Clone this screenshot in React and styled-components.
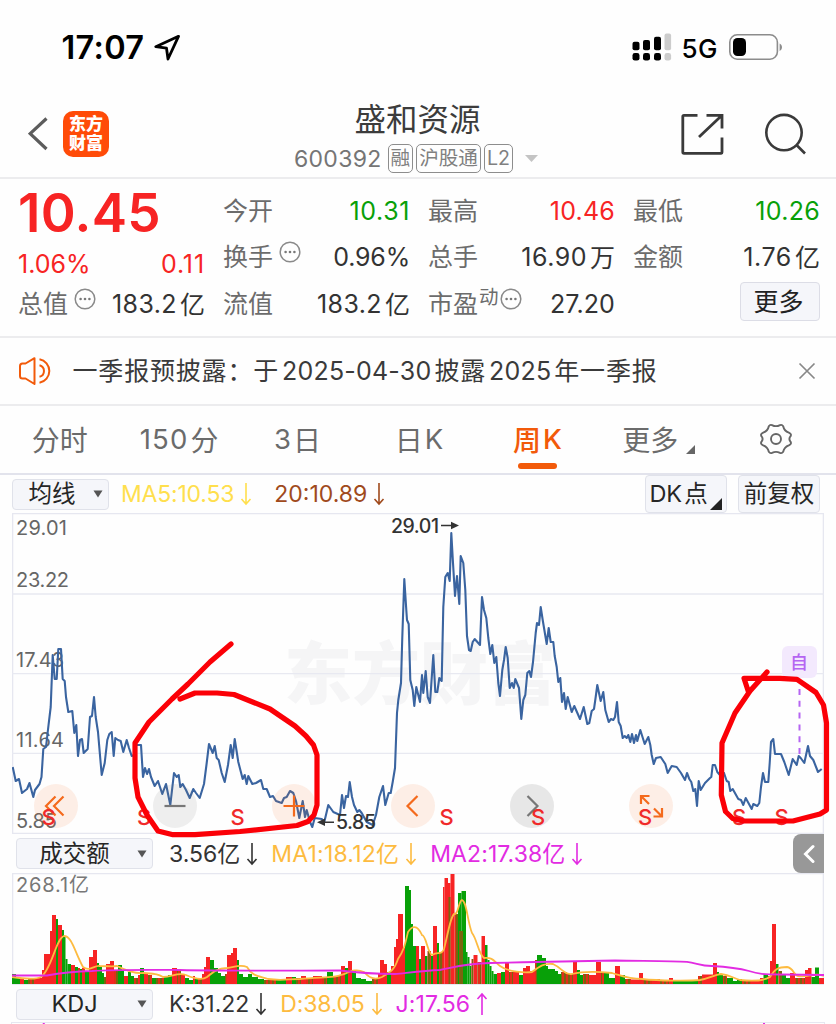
import React from 'react';
import styled, { createGlobalStyle, css } from 'styled-components';

const GlobalStyle = createGlobalStyle`
	* {
		box-sizing: border-box;
	}
	body {
		margin: 0;
		background: #fefefe;
		font-family: Inter, 'Noto Sans CJK SC', sans-serif;
		font-weight: 400;
		color: #333;
		-webkit-font-smoothing: antialiased;
	}
`;

const RED = '#f72424';
const GREEN = '#08a008';
const ORANGE = '#f25a0a';
const GOLD = '#fdbb40';
const PINK = '#e22be2';

const PRICE = [
	'12.7,767 15.7,781 19,779 22,793 27,789 29.5,783 33.3,797 35,790 39.5,784 41.5,777 43.3,749 46,747 48.3,727 50.7,707',
	'52.7,655 54.7,679 56.7,679 58.3,649 61,649 62.7,679 64.7,681 66,697 68.3,712 72.3,711 74.3,733 76.3,725 78,756 80,740 82,739',
	'83.7,753 87.7,749 90,717 92,716 94,697 95.7,717 98,732 101.7,775 104.7,763 107.3,740 109.3,734 111.7,732 113.7,756',
	'115.3,738 118,740 120.7,741 123.3,752 126.7,740 129,748 131.7,756 134.3,755 136,745 141,745 143,777 145,768 147,774 149,769',
	'151,777 154.7,786 158,781 162.3,794 166,784 170.3,805 174,773 176.7,777 178.7,775 180.3,787 182.7,784 186,790 189.7,798',
	'193.3,789 196,793 199.7,798 204,784 206.7,763 209,744 212.7,753 214.7,746 216.7,758 218.7,760 221.7,773 224.7,782 228,765',
	'230.7,745 232.7,758 234.7,739 238.3,762 242.7,779 244.7,775 246.7,784 248.3,776 252.3,784 256,783 261,780 263.3,789 266.7,789',
	'270,797 273,796 276,801 281.7,803 284,798 286.7,797 290,791 293.3,793 296,801 299.3,818 302.7,801 305,817 306.7,810 310,822',
	'312.3,827 314.7,818 321.7,819 324.3,822 328.3,805 333.3,812 340,815 342,795 344,808 346,796 348,797 349.7,782 352,797',
	'354,805 357.3,812 359.3,810 361.7,813 366.7,822 372.7,825 376,815 379.3,797 383,786 385.3,805 388.7,793 390.7,793',
	'392.7,782 395,768 397,713 398.3,700 401,683 402.3,637 404.3,579 406.3,610 407,620 408.7,624 410.3,680 412.7,690 414.3,706',
	'416.3,687 420,702 422,675 423.3,693 425.7,671 427.7,697 430,703 433.3,655 435.3,692 437.3,692 439.3,678 441.7,681',
	'443.3,607 445.3,577 447.7,573 449.7,581 451.3,533 453,563 455,596 457,576 459.3,604 460.7,556 463.3,563 465.3,590 467,636',
	'469,650 470.7,651 472.7,642 474.7,639 480,645 481,620 482,597 484,610 486.3,618 488.3,638 490.3,654 492.3,645 494.3,663',
	'496.3,657 498.3,683 500,696 502.3,670 504,660 505.7,647 507.7,658 509.7,688 512,683 513.7,688 515.3,679 519,688 521.3,719',
	'523.3,700 525.3,695 527.3,673 529.3,671 531,677 533,662 535.7,633 537,623 539,625 540.7,607 542.7,620 546.7,644 548.7,628',
	'550.7,642 553.3,642 554.7,656 556.7,667 558.3,682 560.3,678 562,702 564,693 565.7,709 567.7,697 571.7,712 574.3,706 580,719',
	'583.7,707 587.3,724 589.3,723 591.7,711 594,709 595.7,697 597.3,685 600.7,701 603.3,692 605.3,710 608.7,722 611,719 613.3,720',
	'615,717 617,702 618.7,722 620.7,726 622.7,738 624.7,736 626.7,738 628.3,735 630.3,742 632,734 634,743 636,735 637.3,741 640.3,730',
	'644.7,744 648.3,737 650.3,745 651.7,755 653.7,764 656,758 660.7,757 665.3,764 667.7,773 671.7,766 676.7,767 681,773 685,780',
	'687,773 689.3,779 691.3,782 693.3,791 695.3,789 697,806 698.7,781 700.7,790 705,783 710,778 711.3,777 712.7,765 715,765',
	'717.3,772 721.7,777 724,773 726.7,781 728.7,782 730.3,791 732.7,789 738.3,799 741,800 743.3,805 745.7,798 751.7,809',
	'753.3,804 757.3,806 759.3,803 761,787 763,773 765,782 768.3,782 769.7,763 771,742 773.3,739 775,754 781,754 784.3,762',
	'788.7,775 792.7,759 796.7,765 798.7,756 800.7,758 804.3,763 808,746 810,756 813.3,760 818,772 821.7,769',
].join(' ');

// [end x, height, colour]: every bar starts where the one before it ends
const BARS = [
	[16, 10, 'g'], [20, 6, 'g'], [24, 5, 'r'], [28, 4, 'g'], [34, 5, 'm'], [42, 6, 'r'], [44, 14, 'r'], [50, 30, 'r'], [52, 53, 'r'],
	[56, 69, 'r'], [58, 65, 'g'], [62, 59, 'r'], [64, 54, 'g'], [65.5, 48, 'g'], [67.5, 25, 'g'], [71, 20, 'g'], [75, 19, 'r'],
	[78, 17, 'g'], [80, 16, 'm'], [82, 15, 'g'], [85, 16, 'r'], [89, 12, 'g'], [93, 27, 'r'], [97, 34, 'r'], [99, 21, 'g'],
	[102, 17, 'g'], [104, 11, 'g'], [106, 7, 'm'], [110, 20, 'r'], [114, 23, 'r'], [118, 14, 'm'], [122, 19, 'g'], [124, 14, 'g'],
	[128, 8, 'r'], [131, 12, 'g'], [134, 8, 'g'], [138, 6, 'm'], [140, 9, 'r'], [144, 16, 'g'], [148, 10, 'r'], [152, 9, 'm'],
	[156, 6, 'g'], [164, 6, 'm'], [168, 8, 'g'], [172, 9, 'g'], [177, 16, 'r'], [181, 14, 'm'], [185, 10, 'r'], [189, 6, 'g'],
	[193, 4, 'g'], [195, 8, 'r'], [198, 6, 'g'], [202, 5, 'm'], [204, 10, 'r'], [206, 17, 'r'], [210, 27, 'r'], [214, 24, 'g'],
	[218, 16, 'g'], [221, 11, 'g'], [225, 8, 'g'], [227, 10, 'm'], [231, 29, 'r'], [233, 31, 'r'], [237, 36, 'r'], [239, 24, 'g'],
	[243, 10, 'g'], [248, 7, 'g'], [252, 10, 'g'], [258, 7, 'g'], [264, 5, 'g'], [276, 4, 'm'], [286, 4, 'g'], [292, 7, 'r'],
	[296, 7, 'g'], [301, 6, 'm'], [306, 8, 'r'], [313, 6, 'm'], [322, 8, 'r'], [327, 6, 'm'], [333, 12, 'g'], [341, 8, 'm'],
	[345, 18, 'r'], [348, 16, 'g'], [352, 23, 'r'], [356, 14, 'g'], [361, 6, 'g'], [366, 5, 'g'], [372, 3, 'g'], [378, 5, 'm'],
	[380, 10, 'r'], [384, 24, 'r'], [387, 20, 'r'], [391, 12, 'g'], [394, 18, 'r'], [396, 37, 'r'], [398, 45, 'r'], [403, 70, 'r'],
	[405, 36, 'r'], [409, 98, 'g'], [411, 94, 'g'], [413, 60, 'g'], [416, 38, 'g'], [419, 38, 'r'], [421, 25, 'g'], [425, 38, 'r'],
	[427.5, 28, 'g'], [431, 33, 'm'], [433, 28, 'g'], [437, 58, 'r'], [439, 41, 'g'], [443, 32, 'm'], [444.5, 97, 'r'],
	[448, 106, 'r'], [450.5, 101, 'r'], [454.5, 110, 'r'], [458, 70, 'm'], [461.5, 91, 'g'], [466, 93, 'g'], [467.5, 32, 'g'],
	[469.5, 27, 'g'], [471.5, 18, 'g'], [473.5, 25, 'm'], [477.5, 29, 'r'], [481.5, 22, 'm'], [485, 48, 'r'], [487.5, 39, 'g'],
	[489.5, 24, 'g'], [491.5, 18, 'g'], [493.5, 13, 'g'], [497, 10, 'g'], [501, 11, 'r'], [505, 12, 'g'], [509, 22, 'r'],
	[513, 12, 'm'], [519, 12, 'r'], [523, 9, 'g'], [526, 16, 'r'], [530, 18, 'r'], [535, 13, 'r'], [537, 24, 'm'], [542, 29, 'g'],
	[546, 26, 'g'], [548, 18, 'g'], [555, 15, 'g'], [558, 13, 'g'], [561, 10, 'g'], [567, 12, 'm'], [573, 10, 'm'], [577, 22, 'r'],
	[580, 14, 'g'], [583, 9, 'g'], [589, 10, 'm'], [596, 9, 'r'], [601, 22, 'r'], [604, 11, 'm'], [609, 12, 'g'], [615, 6, 'g'],
	[620, 18, 'r'], [625, 9, 'g'], [631, 5, 'm'], [639, 4.5, 'r'], [643, 11, 'r'], [652, 4.5, 'm'], [660, 5, 'r'], [669, 4, 'm'],
	[673, 6, 'r'], [698, 3.5, 'g'], [702, 8, 'm'], [713, 9.5, 'r'], [717, 21, 'r'], [719, 12, 'g'], [723, 9, 'g'], [727, 8, 'm'],
	[733, 6, 'g'], [737, 3, 'g'], [742, 5, 'g'], [751, 4, 'm'], [760, 3.5, 'r'], [763.5, 6, 'r'], [768, 10, 'g'], [770, 8, 'r'],
	[772, 23, 'r'], [776, 60, 'r'], [778.5, 20, 'g'], [782, 13, 'm'], [786, 9, 'g'], [790, 6, 'g'], [795, 11, 'r'], [805, 6, 'm'],
	[808, 14, 'r'], [811.5, 16, 'r'], [815, 7, 'g'], [819, 16.5, 'g'], [824, 6, 'r'],
];

const BAR_FILL = { r: '#f72424', g: '#08a008', m: 'url(#mixed)' };

const QUOTES = [
	{ label: '今开', value: '10.31', color: GREEN, spacing: 0.6 },
	{ label: '最高', value: '10.46', color: RED, spacing: 0.2 },
	{ label: '最低', value: '10.26', color: GREEN, spacing: 0.3 },
	{ label: '换手', value: '0.96%', spacing: -0.2, info: true },
	{ label: '总手', value: '16.90', unit: '万', spacing: 0.5 },
	{ label: '金额', value: '1.76', unit: '亿', spacing: 0.6 },
	{ label: '流值', value: '183.2', unit: '亿', spacing: 0.4 },
	{ label: '市盈', value: '27.20', sup: '动', spacing: 0.1, info: true },
];

const MoreDots = () => (
	<Info width="22" height="22" viewBox="0 0 22 22" fill="none">
		<circle cx="11" cy="11" r="9.8" stroke="#8a8a8a" strokeWidth="1.5" />
		<g fill="#777">
			<circle cx="6.6" cy="11" r="1.3" />
			<circle cx="11" cy="11" r="1.3" />
			<circle cx="15.4" cy="11" r="1.3" />
		</g>
	</Info>
);

const Arrow = ({ up }) => (
	<ArrowSvg $up={up} width="12" height="24" viewBox="0 0 12 24" fill="none" stroke="currentColor" strokeWidth="1.6">
		<path d="M6 1V21.5M1.5 17L6 22L10.5 17" />
	</ArrowSvg>
);

const Caret = () => (
	<svg width="10" height="8" viewBox="0 0 10 8">
		<path d="M0.5 0.5H9.5L5 7.5Z" fill="#555" />
	</svg>
);

const StatusIcons = () => (
	<svg width="152" height="32" viewBox="632 32 152 32" fill="none">
		<g>
			<rect x="632.5" y="41.8" width="7" height="8.4" rx="2" fill="#000" />
			<rect x="643" y="40" width="7" height="10.2" rx="2" fill="#000" />
			<rect x="654" y="36.8" width="7" height="13.4" rx="2" fill="#000" />
			<rect x="664.5" y="33.4" width="6.6" height="16.8" rx="2" fill="#ccc" />
			<rect x="632.5" y="53" width="7" height="7.6" rx="2.4" fill="#000" />
			<rect x="643" y="53" width="7" height="7.6" rx="2.4" fill="#000" />
			<rect x="654" y="53" width="7" height="7.6" rx="2.4" fill="#000" />
			<rect x="664.5" y="53" width="6.6" height="7.6" rx="2.4" fill="#ccc" />
		</g>
		<text x="681.5" y="57.8" fontSize="26" fontWeight="500" fill="#000" textLength="36">5G</text>
		<rect x="729.8" y="34.8" width="47.6" height="24.4" rx="7.5" stroke="#8c8c8c" strokeWidth="1.6" />
		<rect x="733" y="38" width="13" height="18" rx="4.5" fill="#000" />
		<path d="M779.6 43.5C782.8 45 782.8 49.5 779.6 51Z" fill="#8c8c8c" />
	</svg>
);

const PriceChart = () => (
	<svg width="812" height="321" viewBox="12 513 812 321" fill="none">
		<text x="284" y="699" fontSize="68" fontWeight="900" fill="#f5f5f6" textLength="272">东方财富</text>
		<path d="M12 594H824M12 673.7H824M12 753.3H824" stroke="#e8e9f1" strokeWidth="1.3" />
		<g fontSize="20" fill="#666">
			<text x="16" y="534.5" textLength="51">29.01</text>
			<text x="16" y="587.3" textLength="53">23.22</text>
			<text x="16" y="667.3" textLength="48">17.43</text>
			<text x="16" y="747.3" textLength="48">11.64</text>
			<text x="16" y="827.5" textLength="41">5.85</text>
		</g>
		<polyline points={PRICE} stroke="#3a64a0" strokeWidth="2.1" strokeLinejoin="round" />
		<path d="M799.5 689V754" stroke="#b565f2" strokeWidth="2" strokeDasharray="6 5.8" />
		<rect x="782" y="646" width="35" height="32" rx="6" fill="#f3e9fd" />
		<text x="790" y="669" fontSize="18" fontWeight="500" fill="#b565f2">自</text>
		<g fontSize="19.5" fontWeight="500" fill="#333">
			<text x="391" y="532.5" textLength="48">29.01</text>
			<text x="336" y="829.3" textLength="40">5.85</text>
		</g>
		<path d="M441 525.5H453M334 822.3H322" stroke="#333" strokeWidth="1.6" />
		<path d="M451 521.7L459 525.5L451 529.3ZM325 818.5L317 822.3L325 826.1Z" fill="#333" />
	</svg>
);

const Marks = () => (
	<MarksSvg width="812" height="321" viewBox="12 513 812 321" fill="none">
		<g fontSize="22" fontWeight="500" fill="#f02a2a" textAnchor="middle">
			{[48.5, 144, 237.5, 446.5, 538, 645, 739, 781.5].map(x => (
				<text key={x} x={x} y="825">S</text>
			))}
		</g>
		<g stroke="#fb0007" strokeWidth="5.2" strokeLinecap="round" strokeLinejoin="round">
			<path d="M231 644L210 662L188 684L172 699L149 722L135 743V778L138 797L147 815L158 831L173 834.7H195L240 831.5L297 825.5L308 821.5L314 815L317 805V755L313.5 745L306 736L295 726L270 709L234 694.5L217 693H195L180 699" />
			<path d="M767 672L750 691L735 713L722 743L721.3 795L725.5 811.5L732.7 818.5L743 821H793L820 814L826.5 810V723L823.5 705L816 692.5L797 679.3L780 678.3H744L748.5 692" />
		</g>
	</MarksSvg>
);

const VolumeChart = () => (
	<svg width="812" height="112" viewBox="12 873 812 112" fill="none">
		<defs>
			<pattern id="mixed" width="4" height="4" patternUnits="userSpaceOnUse">
				<rect width="4" height="4" fill="#e03018" />
				<rect width="2" height="4" fill="#7a6410" />
			</pattern>
		</defs>
		<text x="16" y="892" fontSize="20" fill="#777" textLength="73">268.1亿</text>
		{BARS.map(([end, height, kind], i) => {
			const start = i ? BARS[i - 1][0] : 12;
			return <rect key={end} x={start} y={984 - height} width={end - start} height={height} fill={BAR_FILL[kind]} />;
		})}
		<path d="M448.5 984V897H450.5V984ZM459 984V931H463V984Z" fill="#7a6410" />
		<path
			d="M12 977C25 979 35 980 41 977C52 969 56 938 64 936C72 936 75 953 83 967C90 972 94 965 100 966C108 966 112 967 117 966C126 970 134 974 144 973C155 974 158 974 163 977C172 977 178 972 186 975C195 979 203 980 207 977C213 972 218 968 227 968C235 967 240 964 247 967C252 976 258 976 268 979C282 981 288 979 300 979C320 977 335 978 341 975C350 972 355 968 364 972C370 979 376 980 382 977C390 972 394 971 398 959C404 950 405 945 408 932C412 926 417 924 422 935C426 935 428 954 432 955C438 951 441 956 444 949C448 934 450 918 454 914C458 916 459 900 462 900C467 902 467 920 472 933C477 939 478 953 484 958C494 957 494 962 500 966C508 972 525 973 532 972C540 966 544 963 553 964C562 968 564 975 572 974C584 971 602 972 612 973C622 976 628 979 642 979C660 981 690 981 700 980C710 978 714 975 721 974C730 975 733 978 740 980C750 981 764 981 770 977C775 969 778 967 787 967C794 968 793 975 798 976C808 978 815 972 824 976"
			stroke={GOLD}
			strokeWidth="1.8"
		/>
		<path
			d="M12 975.5H47C60 973 75 971.5 92 971C115 969.5 140 969.8 180 970C230 971 290 970.5 340 970.5C360 973 375 974 395 974C410 972.5 425 970.5 440 970C455 967 465 963.5 490 963C530 962 560 961.5 615 960.5C640 961 670 961 687 961.8C697 963 700 966 712 966C730 967 738 968 749 971C758 974 764 974.5 780 974.5L824 975"
			stroke={PINK}
			strokeWidth="1.8"
		/>
	</svg>
);

const App = () => (
	<Screen>
		<GlobalStyle />
		<StatusBar>
			<Clock>17:07</Clock>
			<svg width="27" height="27" viewBox="154 34 27 27" fill="none">
				<path d="M178.5 36.3L155.8 46.7L166.5 48.2L168 59L178.5 36.3Z" stroke="#000" strokeWidth="2.8" strokeLinejoin="round" />
			</svg>
			<Spacer />
			<StatusIcons />
		</StatusBar>

		<Header>
			<svg width="20" height="34" viewBox="28 118 20 34" fill="none">
				<path d="M46.5 119.5L30.2 134.7L46.5 150" stroke="#5c5c5c" strokeWidth="3.2" />
			</svg>
			<Logo>东方<br />财富</Logo>
			<Title>
				<h1>盛和资源</h1>
				<Codes>
					<Code>600392</Code>
					<Badge>融</Badge>
					<Badge>沪股通</Badge>
					<Badge>L2</Badge>
					<svg width="13" height="7" viewBox="0 0 13 7"><path d="M0 0H13L6.5 7Z" fill="#c4c4c4" /></svg>
				</Codes>
			</Title>
			<HeaderActions>
				<svg width="44" height="44" viewBox="681 112 44 44" fill="none" stroke="#3a3a3a" strokeWidth="2.8">
					<path d="M697.5 115.3H684Q682.8 115.3 682.8 116.5V152Q682.8 153.3 684 153.3H721.3Q722 153.3 722 152.3V137.5M706.5 115.3H722V128.5M722 115.3L699 137" />
				</svg>
				<svg width="44" height="44" viewBox="763 112 44 44" fill="none" stroke="#3a3a3a" strokeWidth="2.6">
					<circle cx="784" cy="132.6" r="17.7" />
					<path d="M796.5 145L805 153.5" />
				</svg>
			</HeaderActions>
		</Header>

		<Quote>
			<PriceBlock>
				<Price>10.45</Price>
				<Change>
					<Delta>1.06%</Delta>
					<Delta $spacing={0.9}>0.11</Delta>
				</Change>
				<Cell>
					<Label>总值</Label>
					<MoreDots />
					<Value $spacing={0.4}>183.2<Unit>亿</Unit></Value>
				</Cell>
			</PriceBlock>
			<Stats>
				{QUOTES.map(({ label, value, unit, color, info, sup, spacing }) => (
					<Cell key={label}>
						<Label>{label}</Label>
						{sup && <Sup>{sup}</Sup>}
						{info && <MoreDots />}
						<Value $color={color} $spacing={spacing}>
							{value}
							{unit && <Unit>{unit}</Unit>}
						</Value>
					</Cell>
				))}
				<Cell>
					<MoreButton>更多</MoreButton>
				</Cell>
			</Stats>
		</Quote>

		<Notice>
			<svg width="36" height="30" viewBox="18 355 36 30" fill="none" stroke={ORANGE} strokeWidth="2" strokeLinejoin="round">
				<path d="M34.5 357.2L25.5 362.5H22.5Q20 362.5 20 365V375Q20 377.5 22.5 377.5H25.5L34.5 383Z" />
				<path d="M39.5 358.2A12 12 0 0 1 39.5 381.8M39.5 364.2A6 6 0 0 1 39.5 375.8" />
			</svg>
			<NoticeText>
				一季报预披露：于<b>2025-04-30</b>披露<b>2025</b>年一季报
			</NoticeText>
			<svg width="18" height="18" viewBox="0 0 18 18" stroke="#888" strokeWidth="1.7"><path d="M1.5 1.5L16.5 16.5M16.5 1.5L1.5 16.5" /></svg>
		</Notice>

		<Tabs>
			<Tab>分时</Tab>
			<Tab $spacing={1.2} $shift={-1}><b>150</b>分</Tab>
			<Tab $shift={-2}><b>3</b>日</Tab>
			<Tab $shift={2}>日<b>K</b></Tab>
			<Tab $active $shift={1}>周<b>K</b></Tab>
			<Tab $shift={-2}>
				更多
				<TabCorner width="9" height="9" viewBox="0 0 9 9"><path d="M9 0V9H0Z" fill="#666" /></TabCorner>
			</Tab>
			<Tab>
				<svg width="34" height="32" viewBox="0 0 34 32" fill="none" stroke="#666" strokeWidth="1.9" strokeLinejoin="round">
					<circle cx="17" cy="16" r="5" />
					<path d="M9.8 3.2Q11 1.3 13 2.1Q17 4.2 21 2.1Q23 1.3 24.2 3.2Q25.2 8 29.8 9.6Q32.8 11 31.6 13.2Q29.2 16 31.6 18.8Q32.8 21 29.8 22.4Q25.2 24 24.2 28.8Q23 30.7 21 29.9Q17 27.8 13 29.9Q11 30.7 9.8 28.8Q8.8 24 4.2 22.4Q1.2 21 2.4 18.8Q4.8 16 2.4 13.2Q1.2 11 4.2 9.6Q8.8 8 9.8 3.2Z" />
				</svg>
			</Tab>
		</Tabs>

		<Legend $main>
			<Select $w={97}><span>均线</span><Caret /></Select>
			<Series $color="#ffdf4d" $left={12} $spacing={-0.2}>MA5:10.53<Arrow /></Series>
			<Series $color="#a04a1c" $left={22}>20:10.89<Arrow /></Series>
			<Spacer />
			<Toggle $w={82}>
				DK<i>点</i>
				<ToggleCorner width="12" height="12" viewBox="0 0 12 12"><path d="M12 0V12H0Z" fill="#222" /></ToggleCorner>
			</Toggle>
			<Toggle $w={82}>前复权</Toggle>
		</Legend>
		<ChartPanel $h={321}>
			<PriceChart />
			<ChartTools>
				<ToolButton>
					<svg width="28" height="28" viewBox="0 0 28 28"><path d="M13.5 4.5L4 14L13.5 23.5M21.5 4.5L12 14L21.5 23.5" /></svg>
				</ToolButton>
				<ToolButton $grey>
					<svg width="28" height="28" viewBox="0 0 28 28"><path d="M3.5 14H24.5" /></svg>
				</ToolButton>
				<ToolButton>
					<svg width="28" height="28" viewBox="0 0 28 28"><path d="M3.5 14H24.5M14 3.5V24.5" /></svg>
				</ToolButton>
				<ToolButton>
					<svg width="28" height="28" viewBox="0 0 28 28"><path d="M18.5 4L8.5 14L18.5 24" /></svg>
				</ToolButton>
				<ToolButton $grey $strong>
					<svg width="28" height="28" viewBox="0 0 28 28"><path d="M9.5 4L19.5 14L9.5 24" /></svg>
				</ToolButton>
				<ToolButton>
					<svg width="28" height="28" viewBox="0 0 28 28"><path d="M4 12V4H12.5M4 4L12 12M16.5 24.5H25V16M25 24.5L17 16.5" /></svg>
				</ToolButton>
			</ChartTools>
			<Marks />
		</ChartPanel>

		<Legend>
			<Select $w={137}><span>成交额</span><Caret /></Select>
			<Series $color="#333" $left={16}>3.56亿<Arrow /></Series>
			<Series $color={GOLD} $left={13} $spacing={0.2}>MA1:18.12亿<Arrow /></Series>
			<Series $color={PINK} $left={13} $spacing={0.1}>MA2:17.38亿<Arrow /></Series>
			<Spacer />
			<Collapse>
				<svg width="12" height="20" viewBox="0 0 12 20" fill="none" stroke="#fff" strokeWidth="3" strokeLinecap="round"><path d="M10 2.5L2.5 10L10 17.5" /></svg>
			</Collapse>
		</Legend>
		<ChartPanel $h={112}>
			<VolumeChart />
		</ChartPanel>

		<Legend $short>
			<Select $w={137}><span>KDJ</span><Caret /></Select>
			<Series $color="#333" $left={16}>K:31.22<Arrow /></Series>
			<Series $color={GOLD} $left={13} $spacing={-0.2}>D:38.05<Arrow /></Series>
			<Series $color={PINK} $left={13} $spacing={0.1}>J:17.56<Arrow up /></Series>
		</Legend>
		<KdjPeek>
			<svg width="812" height="2" viewBox="12 0 812 2"><path d="M42 2L43 0H44.5L45.5 2ZM763 0H765V2H763Z" fill={PINK} /></svg>
		</KdjPeek>
	</Screen>
);

export default App;

const Screen = styled.main`
	width: 836px;
	height: 1024px;
	overflow: hidden;
	display: flex;
	flex-direction: column;
	background: #fefefe;
	svg {
		flex: none;
		display: block;
	}
`;

const Spacer = styled.div`
	flex: 1;
`;

const StatusBar = styled.div`
	height: 95px;
	flex: none;
	display: flex;
	align-items: center;
	padding: 0 52px 0 61.5px;
`;

const Clock = styled.div`
	width: 92.5px;
	font-size: 32.5px;
	font-weight: 600;
	letter-spacing: .3px;
	color: #000;
`;

const Header = styled.header`
	height: 84px;
	flex: none;
	display: grid;
	grid-template-columns: 20px 46px 1fr 126px;
	grid-template-rows: 78px;
	column-gap: 15px;
	align-items: center;
	padding: 0 29px 4px 28px;
	border-bottom: 2px solid #ececee;
`;

const Logo = styled.div`
	width: 46px;
	height: 46px;
	border-radius: 10px;
	background: #ff4b08;
	color: #fff;
	font-size: 17px;
	font-weight: 900;
	line-height: 19px;
	text-align: center;
	padding-top: 4px;
`;

const Title = styled.div`
	display: flex;
	flex-direction: column;
	align-items: center;
	padding: 9px 0 0 45px;
	h1 {
		margin: 0;
		font-size: 31.5px;
		font-weight: 400;
		line-height: 40px;
		color: #3c3c3c;
	}
`;

const Codes = styled.div`
	display: flex;
	align-items: center;
	gap: 3px;
	height: 38px;
	margin-left: -3px;
	svg {
		margin-left: 9px;
	}
`;

const Code = styled.span`
	font-size: 23px;
	letter-spacing: .3px;
	color: #757575;
	margin-right: 3px;
`;

const Badge = styled.span`
	height: 29px;
	padding: 0 2px;
	border: 1.5px solid #8d8d8d;
	border-radius: 5px;
	font-size: 19.6px;
	line-height: 26px;
	color: #808080;
`;

const HeaderActions = styled.div`
	display: flex;
	gap: 38px;
`;

const Quote = styled.section`
	height: 157px;
	flex: none;
	display: grid;
	grid-template-columns: 187px 1fr;
	column-gap: 18px;
	padding: 8px 16px 0 18px;
`;

const PriceBlock = styled.div`
	display: grid;
	grid-template-rows: 54px 39px 46.5px;
`;

const Price = styled.div`
	font-size: 53px;
	font-weight: 600;
	line-height: 53px;
	letter-spacing: .3px;
	color: ${RED};
`;

const Change = styled.div`
	display: flex;
	justify-content: space-between;
	align-items: center;
	font-size: 25px;
	color: ${RED};
	padding-top: 6px;
`;

const Delta = styled.span`
	letter-spacing: ${({ $spacing }) => $spacing || 0}px;
`;

const Stats = styled.div`
	display: grid;
	grid-template-columns: repeat(3, 187px);
	grid-auto-rows: 46.5px;
	column-gap: 18px;
`;

const Cell = styled.div`
	display: flex;
	align-items: center;
	height: 46.5px;
	& > :last-child {
		margin-left: auto;
	}
`;

const Label = styled.span`
	font-size: 25px;
	line-height: 36px;
	margin-top: 1px;
	color: #6c6c6c;
`;

const Info = styled.svg`
	margin: -9px 0 0 6px;
`;

const Sup = styled.span`
	font-size: 19.5px;
	color: #6c6c6c;
	margin: -15px -5px 0 1px;
`;

const Value = styled.span`
	display: flex;
	align-items: center;
	padding-top: 1px;
	font-size: 25px;
	letter-spacing: ${({ $spacing }) => $spacing || 0}px;
	color: ${({ $color }) => $color || '#333'};
	white-space: nowrap;
`;

const Unit = styled.span`
	margin: -2px 0 0 3px;
	letter-spacing: 0;
`;

const MoreButton = styled.button`
	width: 80px;
	height: 39px;
	padding: 0 3px 0 0;
	margin-top: -3px;
	border: 1.5px solid #dcdde6;
	border-radius: 4px;
	background: #f5f6fa;
	font: inherit;
	font-size: 25px;
	line-height: 34px;
	color: #222;
`;

const Notice = styled.div`
	height: 70px;
	flex: none;
	display: flex;
	align-items: center;
	padding: 0 20px 0 18px;
	border-top: 2px solid #ececee;
	border-bottom: 2px solid #ececee;
`;

const NoticeText = styled.div`
	flex: 1;
	padding: 0 0 4px 18.5px;
	font-size: 25px;
	letter-spacing: .82px;
	color: #3a3a3a;
	b {
		font-weight: 400;
		letter-spacing: .2px;
		margin: 0 3px;
	}
`;

const Tabs = styled.nav`
	height: 69px;
	flex: none;
	display: grid;
	grid-template-columns: repeat(7, 1fr);
	border-bottom: 2px solid #e2e3ec;
`;

const Tab = styled.div`
	display: flex;
	align-items: center;
	justify-content: center;
	position: relative;
	padding: 0 ${({ $shift = 0 }) => Math.max(0, -2 * $shift)}px 1px ${({ $shift = 0 }) => Math.max(0, 2 * $shift)}px;
	font-size: 28px;
	color: #6b6b6b;
	b {
		font-weight: 400;
		font-size: 27.5px;
		letter-spacing: ${({ $spacing }) => $spacing || 0}px;
		margin: 0 2px;
	}
	${({ $active }) => $active && css`
		color: ${ORANGE};
		font-weight: 500;
		b {
			font-weight: 500;
		}
		&::after {
			content: '';
			position: absolute;
			bottom: 4px;
			left: calc(50% - 19px);
			width: 39px;
			height: 6px;
			border-radius: 3px;
			background: ${ORANGE};
		}
	`}
`;

const TabCorner = styled.svg`
	margin: 20px -8px 0 8px;
`;

const Legend = styled.div`
	height: ${({ $main, $short }) => ($main || $short ? 38 : 39)}px;
	flex: none;
	display: flex;
	align-items: center;
	padding: 0 ${({ $main }) => ($main ? '16px 0 12px' : '12px 0 16px')};
`;

const Select = styled.div`
	width: ${({ $w }) => $w}px;
	height: 31px;
	display: flex;
	align-items: center;
	justify-content: center;
	position: relative;
	padding-right: ${({ $w }) => ($w > 100 ? 20 : 17)}px;
	border: 1.5px solid #e0e2ea;
	border-radius: 4px;
	background: #f5f6fa;
	font-size: 23.5px;
	line-height: 28px;
	color: #262626;
	svg {
		position: absolute;
		right: 5px;
	}
`;

const Series = styled.div`
	display: flex;
	align-items: center;
	margin-left: ${({ $left }) => $left}px;
	font-size: 23px;
	line-height: 30px;
	letter-spacing: ${({ $spacing }) => $spacing || 0}px;
	color: ${({ $color }) => $color};
`;

const ArrowSvg = styled.svg`
	margin-left: 6px;
	transform: ${({ $up }) => ($up ? 'rotate(180deg)' : 'none')};
`;

const Toggle = styled.div`
	width: ${({ $w }) => $w}px;
	height: 38px;
	display: flex;
	align-items: center;
	justify-content: center;
	position: relative;
	margin-left: 11px;
	border: 1.5px solid #e0e2ea;
	border-radius: 4px;
	background: #f5f6fa;
	font-size: 23.5px;
	line-height: 32px;
	color: #262626;
	i {
		font-style: normal;
		margin: 0 15px 0 2px;
	}
`;

const ToggleCorner = styled.svg`
	position: absolute;
	right: 4px;
	bottom: 2px;
`;

const ChartPanel = styled.div`
	position: relative;
	height: ${({ $h }) => $h}px;
	width: 812px;
	flex: none;
	margin-left: 12px;
	box-shadow: inset 0 0 0 1.3px #e6e7f0;
`;

const ChartTools = styled.div`
	position: absolute;
	left: 22px;
	bottom: 6px;
	display: flex;
	gap: 75px;
`;

const ToolButton = styled.div`
	width: 44px;
	height: 44px;
	border-radius: 50%;
	display: flex;
	align-items: center;
	justify-content: center;
	background: ${({ $grey, $strong }) => ($strong ? 'rgba(120, 120, 120, .17)' : $grey ? 'rgba(120, 120, 120, .12)' : 'rgba(250, 110, 40, .11)')};
	svg {
		fill: none;
		stroke: ${({ $grey }) => ($grey ? '#777' : '#f46a1c')};
		stroke-width: 2.2;
	}
`;

const MarksSvg = styled.svg`
	position: absolute;
	top: 0;
	left: 0;
	z-index: 2;
	overflow: visible;
`;

const Collapse = styled.div`
	width: 31px;
	height: 39px;
	display: flex;
	align-items: center;
	justify-content: center;
	border-radius: 8px 0 0 8px;
	background: #989898;
`;

const KdjPeek = styled.div`
	flex: 1;
	margin: 0 12px;
	box-shadow: 0 0 0 1px #e6e7f0;
`;
